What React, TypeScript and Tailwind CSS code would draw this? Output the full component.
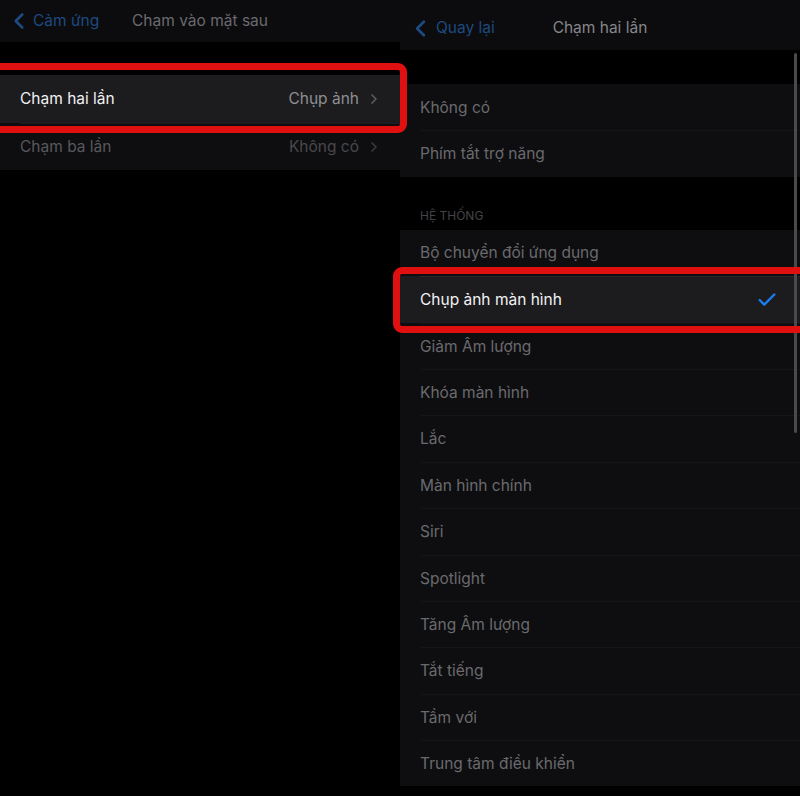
import { ChevronLeft, ChevronRight, Check } from "lucide-react";

const font = { fontFamily: "Inter, 'Noto Sans', sans-serif" };

const systemItems = [
  "Bộ chuyển đổi ứng dụng",
  "Chụp ảnh màn hình",
  "Giảm Âm lượng",
  "Khóa màn hình",
  "Lắc",
  "Màn hình chính",
  "Siri",
  "Spotlight",
  "Tăng Âm lượng",
  "Tắt tiếng",
  "Tầm với",
  "Trung tâm điều khiển",
];

function LeftPanel() {
  return (
    <div className="w-[400px] shrink-0 flex flex-col bg-black">
      <div className="h-[42px] bg-[#0c0c0e] flex items-center relative">
        <div className="flex items-center pl-[6px] text-[#1d4a80]">
          <ChevronLeft className="w-[26px] h-[26px]" strokeWidth={2.4} />
          <span className="text-[15.5px] ml-[1px]">Cảm ứng</span>
        </div>
        <div className="absolute inset-0 flex items-center justify-center text-[15.5px] text-[#6a6a6e] pointer-events-none">
          Chạm vào mặt sau
        </div>
      </div>
      <div className="h-[33px]" />
      <div className="h-[48px] bg-[#1c1c1e] flex items-center pl-[20px] pr-[18px]">
        <span className="text-[15.5px] text-[#f0f0f2] flex-1">Chạm hai lần</span>
        <span className="text-[15.5px] text-[#8e8e93]">Chụp ảnh</span>
        <ChevronRight className="w-[16px] h-[16px] ml-[7px] text-[#5c5c60]" strokeWidth={2.5} />
      </div>
      <div className="h-[47px] bg-[#0e0e10] flex flex-col">
        <div className="ml-[20px] h-px bg-[#1e1e20]" />
        <div className="flex-1 flex items-center pl-[20px] pr-[18px]">
          <span className="text-[15.5px] text-[#58585c] flex-1">Chạm ba lần</span>
          <span className="text-[15.5px] text-[#48484c]">Không có</span>
          <ChevronRight className="w-[16px] h-[16px] ml-[7px] text-[#3a3a3e]" strokeWidth={2.5} />
        </div>
      </div>
    </div>
  );
}

function Row({ label, active, first }: { label: string; active?: boolean; first?: boolean }) {
  return (
    <div className={`h-[46.4px] flex flex-col ${active ? "bg-[#1c1c1e]" : "bg-[#0e0e10]"}`}>
      {!first && <div className={`ml-[20px] h-px ${active ? "bg-[#2a2a2c]" : "bg-[#151517]"}`} />}
      <div className="flex-1 flex items-center pl-[20px] pr-[22px]">
        <span className={`text-[15.5px] flex-1 ${active ? "text-[#f2f2f4]" : "text-[#6a6a6e]"}`}>{label}</span>
        {active && <Check className="w-[22px] h-[22px] text-[#1a7ef0]" strokeWidth={2.6} />}
      </div>
    </div>
  );
}

function RightPanel() {
  return (
    <div className="w-[400px] shrink-0 flex flex-col bg-black relative">
      <div className="h-[50px] bg-[#0c0c0e] flex items-center relative">
        <div className="flex items-center pl-[7px] pt-[6px] text-[#1d4a80]">
          <ChevronLeft className="w-[27px] h-[27px]" strokeWidth={2.4} />
          <span className="text-[15.5px] ml-[2px]">Quay lại</span>
        </div>
        <div className="absolute inset-0 pt-[6px] flex items-center justify-center text-[15.5px] text-[#86868a] pointer-events-none">
          Chạm hai lần
        </div>
      </div>
      <div className="h-[34px]" />
      <Row label="Không có" first />
      <Row label="Phím tắt trợ năng" />
      <div className="h-[53px] flex items-end pl-[20px] pb-[5px]">
        <span className="text-[12px] text-[#444448] uppercase">Hệ thống</span>
      </div>
      {systemItems.map((item, i) => (
        <Row key={item} label={item} first={i === 0} active={item === "Chụp ảnh màn hình"} />
      ))}
      <div className="absolute right-[3px] top-[53px] w-[3px] h-[380px] rounded-full bg-[#4a4a4c]" />
    </div>
  );
}

export default function App() {
  return (
    <div className="w-[800px] h-[796px] bg-black flex overflow-hidden relative" style={font}>
      <LeftPanel />
      <RightPanel />
      <div className="absolute left-[-20px] top-[63px] w-[427px] h-[70px] border-[7px] border-[#e01010] rounded-[9px] pointer-events-none" />
      <div className="absolute left-[393px] top-[267px] w-[430px] h-[66px] border-[7px] border-[#e01010] rounded-[9px] pointer-events-none" />
    </div>
  );
}
